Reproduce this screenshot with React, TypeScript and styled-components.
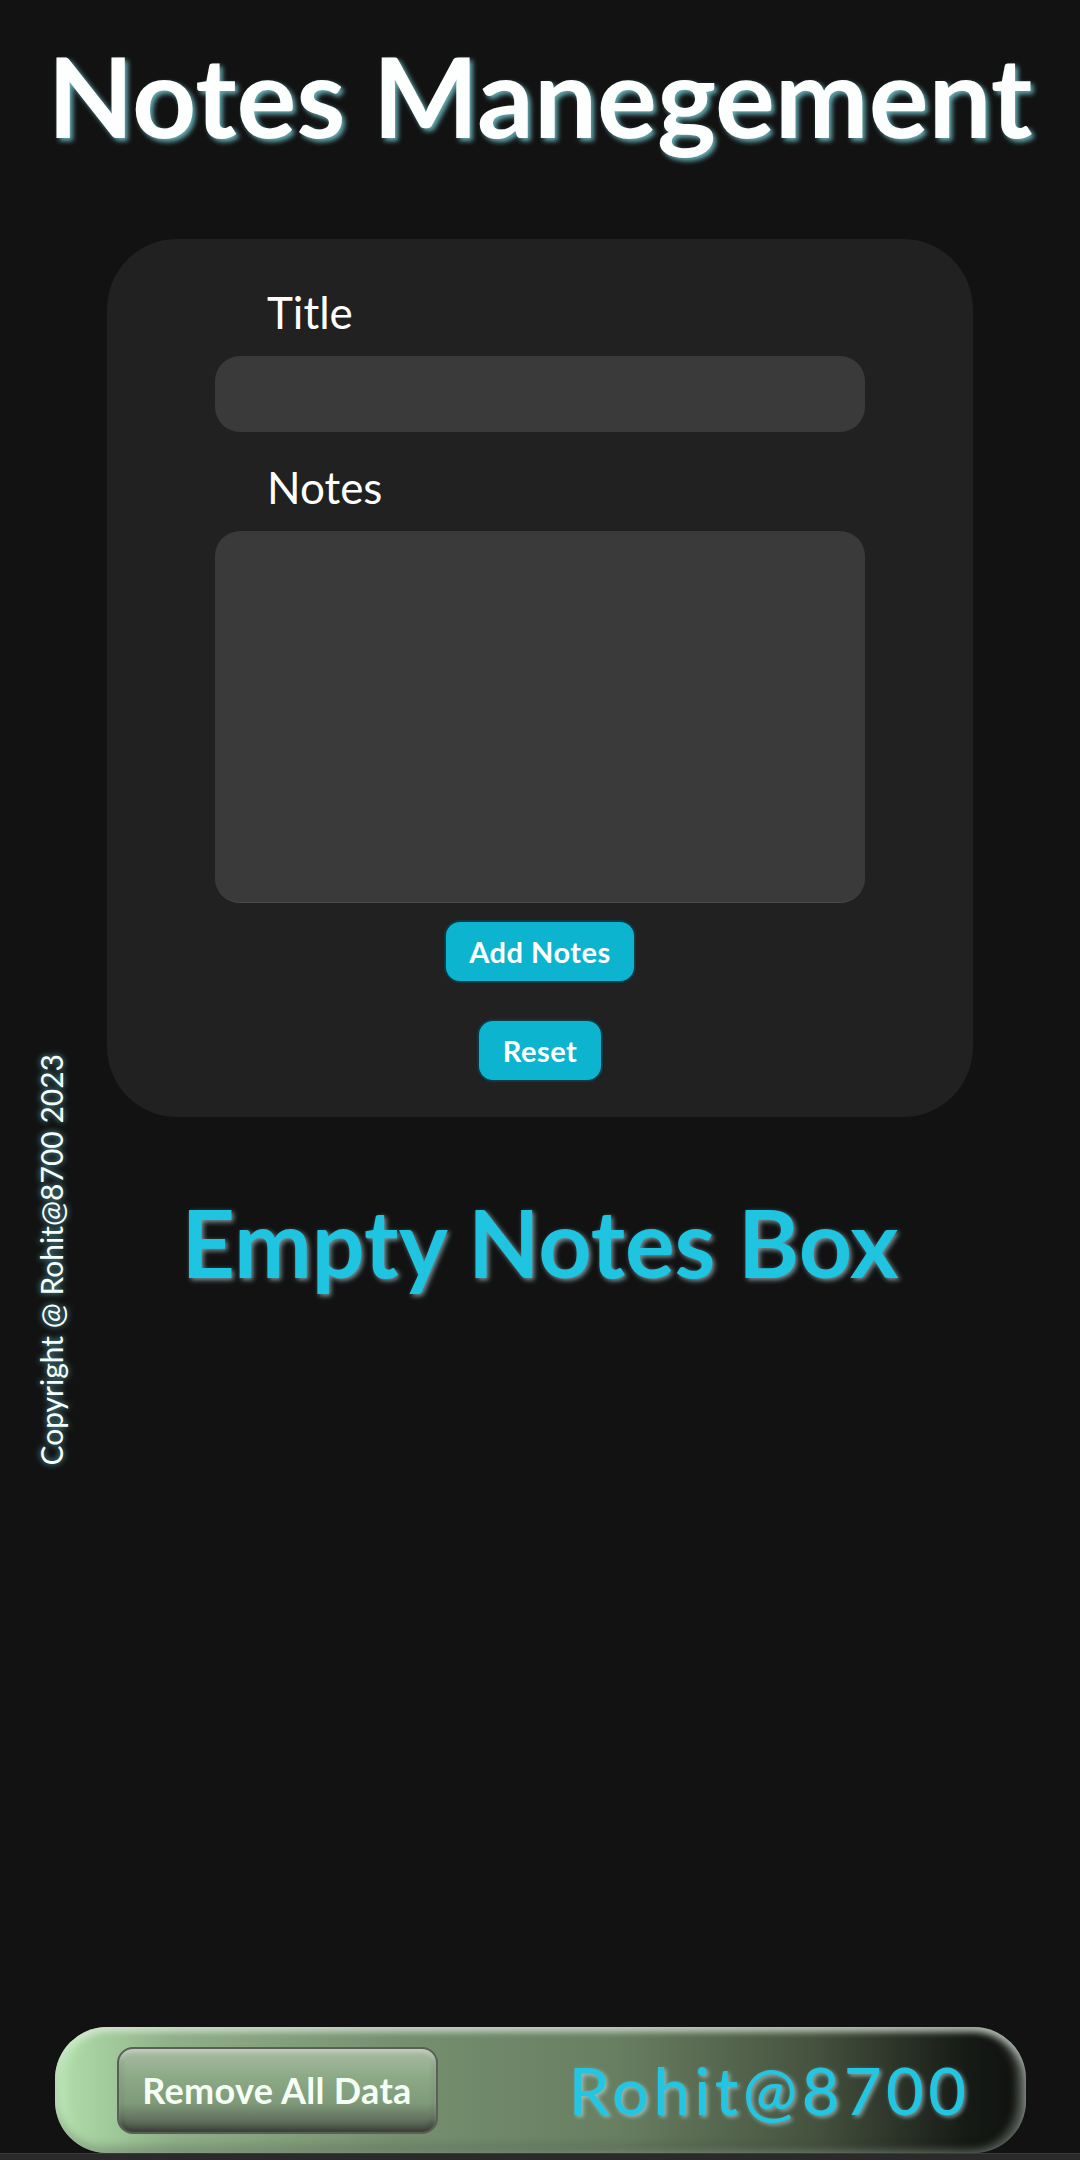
import React from "react";
import styled, { createGlobalStyle } from "styled-components";

const GlobalStyle = createGlobalStyle`
  html, body {
    margin: 0;
    padding: 0;
    background: #121212;
  }
  * { box-sizing: border-box; }
`;

const Page = styled.div`
  position: relative;
  min-height: 2160px;
  display: flex;
  flex-direction: column;
  align-items: center;
  background: #121212;
  font-family: Lato, "Liberation Sans", sans-serif;
  color: #fff;
`;

const Heading = styled.h1`
  margin: 28px 0 0;
  font-size: 112px;
  line-height: 1.2;
  font-weight: 700;
  color: #fdfefe;
  text-shadow: 3px 3px 5px rgba(130, 225, 235, 0.75);
  white-space: nowrap;
`;

const Card = styled.form`
  margin-top: 77px;
  width: 866px;
  background: #212121;
  border-radius: 70px;
  padding: 47px 108px 35px;
  display: flex;
  flex-direction: column;
  align-items: center;
`;

const Field = styled.div<{ $top?: number }>`
  width: 100%;
  display: flex;
  flex-direction: column;
  gap: 17px;
  margin-top: ${(p) => p.$top ?? 0}px;
`;

const Label = styled.label`
  padding-left: 52px;
  font-size: 44px;
  line-height: 1.2;
  font-weight: 400;
  color: #fff;
`;

const TextInput = styled.input`
  width: 100%;
  height: 76px;
  border: none;
  border-radius: 25px;
  background: #3a3a3a;
  outline: none;
`;

const TextArea = styled.textarea`
  width: 100%;
  height: 372px;
  border: none;
  border-bottom: 1px solid #4a4a4a;
  border-radius: 25px;
  background: #3a3a3a;
  outline: none;
  resize: none;
`;

const ActionButton = styled.button<{ $top: number; $w: number }>`
  margin-top: ${(p) => p.$top}px;
  width: ${(p) => p.$w}px;
  height: 63px;
  border: 2px solid #0c3a44;
  border-radius: 16px;
  background: #0db4cf;
  color: #fff;
  font-family: Lato, "Liberation Sans", sans-serif;
  font-size: 29px;
  font-weight: 700;
  letter-spacing: 0.5px;
`;

const EmptyText = styled.h2`
  margin: 70px 0 0;
  font-size: 93px;
  line-height: 1.2;
  font-weight: 700;
  color: #1ec4e0;
  text-shadow: 2px 2px 5px rgba(200, 240, 250, 0.6);
  white-space: nowrap;
`;

const SideNote = styled.div`
  position: absolute;
  left: 36px;
  top: 1054px;
  writing-mode: vertical-rl;
  transform: rotate(180deg);
  font-size: 30px;
  line-height: 1;
  color: #f4ffff;
  text-shadow: 0 0 6px rgba(120, 220, 230, 0.8);
  white-space: nowrap;
`;

const FooterBar = styled.footer`
  margin-top: auto;
  width: 971px;
  height: 126px;
  border-radius: 52px;
  display: flex;
  align-items: center;
  justify-content: space-between;
  padding: 0 55px 0 62px;
  background: linear-gradient(
    90deg,
    #b2e0ab 0%,
    #8fb088 12%,
    #76906f 35%,
    #687e61 58%,
    #46533f 78%,
    #161a15 94%,
    #0e100e 100%
  );
  box-shadow: inset 0 5px 6px rgba(230, 240, 230, 0.55),
    inset 0 -6px 10px rgba(0, 0, 0, 0.25),
    inset -8px 0 10px rgba(200, 210, 200, 0.45),
    inset 8px 0 12px rgba(220, 255, 220, 0.4);
`;

const RemoveButton = styled.button`
  width: 321px;
  height: 87px;
  border: 2px solid #5a5f58;
  border-radius: 16px;
  background: linear-gradient(180deg, #a9bba4 0%, #8ba985 35%, #7f9a79 65%, #4d554b 100%);
  box-shadow: inset 0 3px 4px rgba(255, 255, 255, 0.35), inset 0 -4px 6px rgba(0, 0, 0, 0.3);
  color: #f6fff5;
  font-family: Lato, "Liberation Sans", sans-serif;
  font-size: 36px;
  font-weight: 700;
  letter-spacing: 0.3px;
`;

const Brand = styled.span`
  font-size: 65px;
  line-height: 1;
  font-weight: 500;
  letter-spacing: 4.5px;
  color: #22c6e2;
  text-shadow: 2px 2px 4px rgba(200, 240, 250, 0.55);
`;

const BottomStrip = styled.div`
  width: 100%;
  height: 7px;
  background: #2a2a2a;
  border-top: 1px solid #3a3a3a;
`;

export default function App() {
  return (
    <>
      <GlobalStyle />
      <Page>
        <Heading>Notes Manegement</Heading>
        <Card onSubmit={(e) => e.preventDefault()}>
          <Field>
            <Label>Title</Label>
            <TextInput type="text" />
          </Field>
          <Field $top={29}>
            <Label>Notes</Label>
            <TextArea />
          </Field>
          <ActionButton type="submit" $top={17} $w={192}>
            Add Notes
          </ActionButton>
          <ActionButton type="reset" $top={36} $w={126}>
            Reset
          </ActionButton>
        </Card>
        <EmptyText>Empty Notes Box</EmptyText>
        <SideNote>Copyright @ Rohit@8700 2023</SideNote>
        <FooterBar>
          <RemoveButton>Remove All Data</RemoveButton>
          <Brand>Rohit@8700</Brand>
        </FooterBar>
        <BottomStrip />
      </Page>
    </>
  );
}
